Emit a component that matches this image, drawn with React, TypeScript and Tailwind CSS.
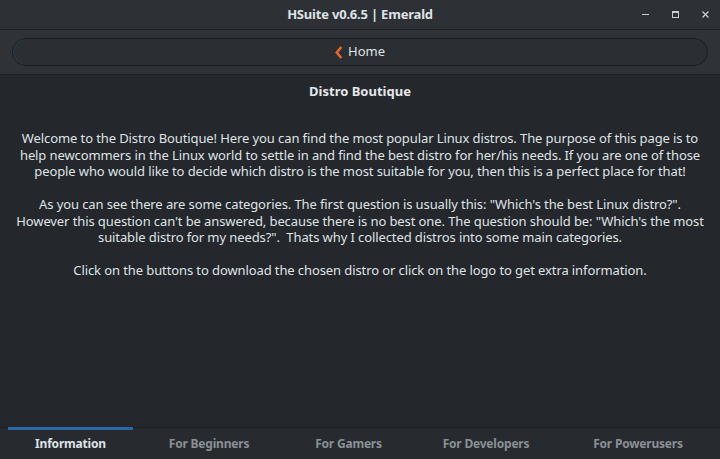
import React from "react";

const font = { fontFamily: '"Noto Sans", "Open Sans", sans-serif' };

export default function App() {
  return (
    <div className="w-[720px] h-[459px] flex flex-col bg-[#24272b] text-[#dfe3e6] overflow-hidden" style={font}>
      {/* Title bar */}
      <div className="h-[30px] flex items-center justify-center relative bg-[#2d3135] border-b border-[#1e2124]">
        <span className="text-[13px] font-bold text-[#dfe2e5] tracking-[-0.2px]">HSuite v0.6.5 | Emerald</span>
        <div className="absolute right-0 top-0 h-full flex items-center">
          <div className="w-[30px] flex justify-center">
            <div className="w-[7px] h-px bg-[#c9cdd0]" />
          </div>
          <div className="w-[30px] flex justify-center">
            <div className="w-[7px] h-[7px] border border-[#c9cdd0] border-t-2" />
          </div>
          <div className="w-[30px] flex justify-center">
            <svg width="7" height="7" viewBox="0 0 7 7">
              <path d="M0.5 0.5 L6.5 6.5 M6.5 0.5 L0.5 6.5" stroke="#c9cdd0" strokeWidth="1.2" />
            </svg>
          </div>
        </div>
      </div>
      {/* Toolbar */}
      <div className="h-[45px] bg-[#2f3337] px-[12px] pt-[8px] pb-[8px] border-b border-[#202326]">
        <div className="h-[28px] rounded-full border border-[#1b1e21] bg-[#2b2f33] flex items-center justify-center gap-[5px] shadow-[inset_1px_0_0_#24455f]">
          <svg width="8" height="13" viewBox="0 0 8 13">
            <path d="M6.3 1 L1.8 6.5 L6.3 12" stroke="#e8652b" strokeWidth="2.6" fill="none" strokeLinejoin="miter" />
          </svg>
          <span className="text-[13px] text-[#dfe3e6]">Home</span>
        </div>
      </div>
      {/* Content */}
      <div className="flex-1 flex flex-col items-center pt-[6px]">
        <div className="text-[13px] font-bold text-[#e4e7ea] h-[20px] leading-[20px]">Distro Boutique</div>
        <div className="mt-[29px] px-[16px] text-center text-[13px] leading-[16.5px] text-[#dfe3e6] tracking-[-0.1px] whitespace-nowrap">
          <p>Welcome to the Distro Boutique! Here you can find the most popular Linux distros. The purpose of this page is to</p>
          <p>help newcommers in the Linux world to settle in and find the best distro for her/his needs. If you are one of those</p>
          <p>people who would like to decide which distro is the most suitable for you, then this is a perfect place for that!</p>
          <p>&nbsp;</p>
          <p>As you can see there are some categories. The first question is usually this: "Which's the best Linux distro?".</p>
          <p>However this question can't be answered, because there is no best one. The question should be: "Which's the most</p>
          <p>suitable distro for my needs?".&nbsp; Thats why I collected distros into some main categories.</p>
          <p>&nbsp;</p>
          <p>Click on the buttons to download the chosen distro or click on the logo to get extra information.</p>
        </div>
      </div>
      {/* Tab bar */}
      <div className="h-[32px] bg-[#272b2f] border-t border-[#1d2023] flex pl-[8px] text-[12px] font-bold tracking-[-0.2px]">
        <div className="w-[125px] flex items-center justify-center text-[#dde2e6] relative">
          <div className="absolute -top-px left-0 right-0 h-[3px] bg-[#2a68a8]" />
          Information
        </div>
        <div className="w-[152px] flex items-center justify-center text-[#8a9095]">For Beginners</div>
        <div className="w-[127px] flex items-center justify-center text-[#8a9095]">For Gamers</div>
        <div className="w-[148px] flex items-center justify-center text-[#8a9095]">For Developers</div>
        <div className="w-[156px] flex items-center justify-center text-[#8a9095]">For Powerusers</div>
      </div>
    </div>
  );
}
